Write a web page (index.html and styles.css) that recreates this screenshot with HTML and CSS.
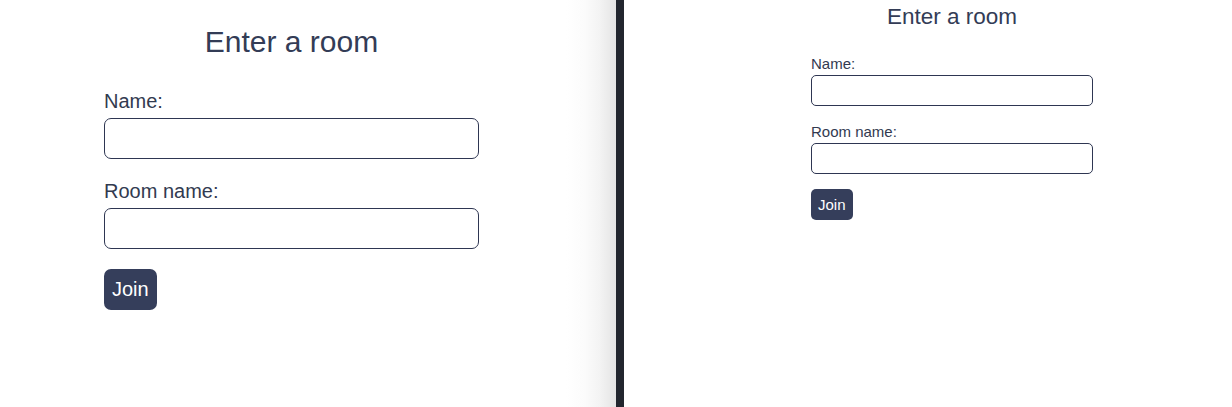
FILE: index.html
```html
<!DOCTYPE html>
<html lang="en">
<head>
<meta charset="utf-8">
<title>Enter a room</title>
<link rel="stylesheet" href="styles.css">
</head>
<body>
  <div class="split">
    <section class="pane pane--large">
      <div class="room">
        <h1 class="room__title">Enter a room</h1>
        <label class="room__label" for="n1">Name:</label>
        <input class="room__input" id="n1" type="text">
        <label class="room__label room__label--gap" for="r1">Room name:</label>
        <input class="room__input" id="r1" type="text">
        <button class="room__btn" type="button">Join</button>
      </div>
    </section>
    <div class="divider"></div>
    <section class="pane pane--small">
      <div class="room">
        <h1 class="room__title">Enter a room</h1>
        <label class="room__label" for="n2">Name:</label>
        <input class="room__input" id="n2" type="text">
        <label class="room__label room__label--gap" for="r2">Room name:</label>
        <input class="room__input" id="r2" type="text">
        <button class="room__btn" type="button">Join</button>
      </div>
    </section>
  </div>
</body>
</html>
```

FILE: styles.css
```css
* { box-sizing: border-box; }

html, body {
  margin: 0;
  padding: 0;
  background: #ffffff;
}

body {
  font-family: "Liberation Sans", Arial, sans-serif;
  color: #333b53;
  width: 1232px;
  height: 407px;
  overflow: hidden;
}

.split {
  display: flex;
  height: 407px;
}

.pane {
  height: 100%;
}

.pane--large {
  width: 616px;
  flex: none;
  padding-left: 104px;
  background: linear-gradient(to right, #ffffff 0, #ffffff 566px, #fbfbfb 585px, #f3f3f3 600px, #e4e4e4 616px);
  --title: 30px;
  --title-lh: 34px;
  --title-top: 25px;
  --label: 20px;
  --label-lh: 23px;
  --label-top: 31px;
  --label-gap: 21px;
  --label-after: 5px;
  --input-w: 375px;
  --input-h: 41px;
  --radius: 7px;
  --btn-top: 20px;
  --btn-pad: 9px 8px;
}

.divider {
  width: 8px;
  flex: none;
  background: #22262e;
}

.pane--small {
  flex: 1;
  padding-left: 187px;
  --title: 22.5px;
  --title-lh: 26px;
  --title-top: 4px;
  --label: 15px;
  --label-lh: 17px;
  --label-top: 25px;
  --label-gap: 17px;
  --label-after: 3px;
  --input-w: 282px;
  --input-h: 31px;
  --radius: 5px;
  --btn-top: 15px;
  --btn-pad: 7px 7px;
}

.room {
  display: flex;
  flex-direction: column;
  align-items: flex-start;
  width: var(--input-w);
}

.room__title {
  align-self: stretch;
  margin: var(--title-top) 0 0;
  font-size: var(--title);
  line-height: var(--title-lh);
  font-weight: normal;
  text-align: center;
  color: #333c56;
}

.room__label {
  margin-top: var(--label-top);
  margin-bottom: var(--label-after);
  font-size: var(--label);
  line-height: var(--label-lh);
  color: #323a50;
}

.room__label--gap {
  margin-top: var(--label-gap);
}

.room__input {
  width: var(--input-w);
  height: var(--input-h);
  margin: 0;
  border: 1px solid #2e3652;
  border-radius: var(--radius);
  background: #ffffff;
  font-family: inherit;
  font-size: var(--label);
  padding: 0 8px;
  outline: none;
}

.room__btn {
  margin-top: var(--btn-top);
  padding: var(--btn-pad);
  border: none;
  border-radius: var(--radius);
  background: #353e5b;
  color: #ffffff;
  font-family: inherit;
  font-size: var(--label);
  line-height: var(--label-lh);
  cursor: pointer;
}
```
